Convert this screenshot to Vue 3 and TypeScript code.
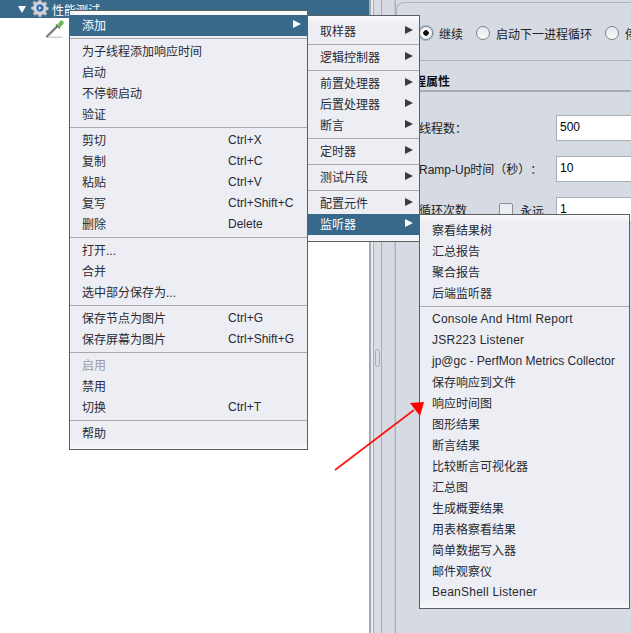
<script setup lang="ts">
interface Item { t?: string; k?: string; sub?: boolean; hl?: boolean; off?: boolean; sep?: boolean; wide?: boolean }
const wideLabels = ['Console And Html Report', 'JSR223 Listener', 'BeanShell Listener']
const s = (list: string): Item[] => list.split('|').map((x) => x === '-' ? { sep: true } : { t: x, wide: wideLabels.includes(x) })
const main: Item[] = [
  { t: '添加', sub: true, hl: true }, { sep: true },
  { t: '为子线程添加响应时间' }, { t: '启动' }, { t: '不停顿启动' }, { t: '验证' }, { sep: true },
  { t: '剪切', k: 'Ctrl+X' }, { t: '复制', k: 'Ctrl+C' }, { t: '粘贴', k: 'Ctrl+V' }, { t: '复写', k: 'Ctrl+Shift+C' }, { t: '删除', k: 'Delete' }, { sep: true },
  { t: '打开...' }, { t: '合并' }, { t: '选中部分保存为...' }, { sep: true },
  { t: '保存节点为图片', k: 'Ctrl+G' }, { t: '保存屏幕为图片', k: 'Ctrl+Shift+G' }, { sep: true },
  { t: '启用', off: true }, { t: '禁用' }, { t: '切换', k: 'Ctrl+T' }, { sep: true },
  { t: '帮助' },
]
const second: Item[] = [
  { t: '取样器', sub: true }, { sep: true }, { t: '逻辑控制器', sub: true }, { sep: true },
  { t: '前置处理器', sub: true }, { t: '后置处理器', sub: true }, { t: '断言', sub: true }, { sep: true },
  { t: '定时器', sub: true }, { sep: true }, { t: '测试片段', sub: true }, { sep: true },
  { t: '配置元件', sub: true }, { t: '监听器', sub: true, hl: true },
]
const third: Item[] = s('察看结果树|汇总报告|聚合报告|后端监听器|-|Console And Html Report|JSR223 Listener|jp@gc - PerfMon Metrics Collector|保存响应到文件|响应时间图|图形结果|断言结果|比较断言可视化器|汇总图|生成概要结果|用表格察看结果|简单数据写入器|邮件观察仪|BeanShell Listener')
const menus = [
  { cls: 'm1', items: main },
  { cls: 'm2', items: second },
  { cls: 'm3', items: third },
]
</script>

<template>
  <div class="screen">
    <aside class="tree">
      <div class="tree-row selected">
        <span class="twist"></span>
        <svg class="gear" width="18" height="18" viewBox="0 0 20 20">
          <path d="M8.500 1h3l.5 2.400 1.600.7 2.100-1.300 2.100 2.100-1.300 2.100.7 1.600 2.400.5v3l-2.400.5-.7 1.600 1.300 2.100-2.100 2.100-2.100-1.300-1.600.7-.5 2.400h-3l-.5-2.400-1.600-.7-2.100 1.300-2.100-2.100 1.300-2.100-.7-1.600L0 11.500v-3l2.400-.5.7-1.600-1.300-2.100 2.100-2.100 2.100 1.300L7.600 2.800z" fill="#cfd3d8" stroke="#79828c" stroke-width=".8"/>
          <circle cx="10" cy="10" r="4.600" fill="#2c67a8" stroke="#f2f4f7" stroke-width=".9"/>
          <path d="M8.600 7.800l3.200 2.200-3.200 2.200z" fill="#dbe7f3"/>
        </svg>
        <span class="tree-label">性能测试</span>
      </div>
      <div class="tree-row child">
        <svg width="20" height="20" viewBox="0 0 20 20">
          <ellipse cx="9" cy="18.300" rx="8" ry="1" fill="#d4d4d4"/>
          <path d="M1 16.500l-.5 1.500 1.500-.5 9.500-9.500-1-1z" fill="#8b9197" stroke="#444a4f" stroke-width=".8"/>
          <path d="M9.500 6l1-1 4 4-1 1z" fill="#4c7d45"/>
          <path d="M11.500 5.500l3-3.800c1.800-1 4 1.200 3 3L14 8.500z" fill="#6bb35c"/>
        </svg>
      </div>
    </aside>
    <div class="splitter"><span class="grip"></span></div>
    <main class="right">
      <section class="card">
        <div class="radios">
          <span class="radio on"></span><span class="rlabel">继续</span>
          <span class="radio"></span><span class="rlabel">启动下一进程循环</span>
          <span class="radio"></span><span class="rlabel">停止线程</span>
        </div>
      </section>
      <h3 class="title">线程属性</h3>
      <div class="field"><label class="flabel">线程数：</label><span class="input">500</span></div>
      <div class="field"><label class="flabel">Ramp-Up时间（秒）：</label><span class="input">10</span></div>
      <div class="field"><label class="flabel short">循环次数</label><span class="check"></span><span class="forever">永远</span><span class="input">1</span></div>
    </main>

    <div v-for="m in menus" :key="m.cls" class="menu" :class="m.cls">
      <template v-for="(it, i) in m.items" :key="i">
        <div v-if="it.sep" class="sep"></div>
        <div v-else class="item" :class="{ hl: it.hl, off: it.off, wide: it.wide }">
          <span class="label">{{ it.t }}</span>
          <span v-if="it.k" class="key">{{ it.k }}</span>
          <span v-if="it.sub" class="arrow"></span>
        </div>
      </template>
    </div>

    <svg class="pointer" width="100" height="80" viewBox="0 0 100 80">
      <path d="M1 75L80 15" stroke="#ff1010" stroke-width="1.600" fill="none"/>
      <path d="M90 7L76 8 86 21z" fill="#ff0000"/>
    </svg>
  </div>
</template>

<style>
html, body { margin: 0; background: #fff; overflow: hidden; }
</style>

<style scoped>
.screen {
  position: relative;
  display: flex;
  width: 631px;
  height: 633px;
  overflow: hidden;
  font-family: "Liberation Sans", "Noto Sans CJK SC", sans-serif;
  font-size: 12px;
  color: #222;
  background: #d6dae2;
}
.tree { width: 369px; flex: none; background: #fff; }
.tree-row { height: 18px; display: flex; align-items: center; }
.selected { background: #38688a; color: #fff; padding-left: 18px; }
.twist { width: 0; height: 0; border-left: 4px solid transparent; border-right: 4px solid transparent; border-top: 7px solid #fff; margin-right: 5px; }
.gear { margin-top: -2px; flex: none; }
.tree-label { font-size: 12px; margin-left: 3px; }
.child { height: 20px; padding: 1px 0 0 46px; }
.splitter {
  width: 27px;
  flex: none;
  box-sizing: border-box;
  display: flex;
  align-items: flex-start;
  padding-left: 6px;
  background: linear-gradient(90deg,
    #a4a8b0 0 2px, #e9ebef 2px 4px, #a9adb5 4px 5px, #d9dce3 5px 12px, #a9adb5 12px 13px, #d6dae2 13px 25px, #c3c7cf 25px 26px, #aeb2ba 26px 27px);
}
.grip { display: block; box-sizing: border-box; width: 5px; height: 18px; margin-top: 349px; border: 1px solid #a9adb5; border-radius: 3px; }
.right { flex: 1; min-width: 0; overflow: hidden; white-space: nowrap; }
.card {
  box-sizing: border-box;
  height: 59px;
  margin-top: 2px;
  border: 1px solid #aeb2ba;
  border-right: 0;
  border-radius: 8px 0 0 0;
  background: #d6dae2;
}
.radios { display: flex; align-items: center; height: 22px; margin-top: 19px; padding-left: 22px; }
.radio {
  box-sizing: border-box;
  flex: none;
  width: 14px;
  height: 14px;
  border: 1px solid #7d828a;
  border-radius: 50%;
  background: linear-gradient(#e4e6ea, #fbfbfc);
  margin-right: 6px;
}
.radio.on { background: radial-gradient(circle, #111 0 2.500px, #f4f5f7 3px); box-shadow: 0 0 0 1px #9cb6cc; }
.rlabel { margin-right: 13px; }
.title { box-sizing: border-box; margin: 0; height: 31px; padding: 14px 0 0 6px; font-size: 12px; line-height: 14px; font-weight: bold; color: #111; border-bottom: 2px solid #a9adb5; }
.field { display: flex; align-items: center; height: 26px; margin-top: 15px; padding-left: 23px; }
.title + .field { margin-top: 23px; }
.flabel { width: 137px; flex: none; padding-bottom: 2px; text-spacing-trim: space-all; }
.flabel.short { width: 80px; }
.input {
  box-sizing: border-box;
  flex: none;
  width: 120px;
  height: 26px;
  padding: 4px 3px;
  background: #fff;
  border: 1px solid #a9adb5;
  color: #000;
}
.check { box-sizing: border-box; width: 14px; height: 14px; border: 1px solid #8a8f96; background: #eceef2; border-radius: 2px; margin-right: 7px; flex: none; }
.forever { width: 36px; flex: none; }

.menu {
  position: absolute;
  box-sizing: border-box;
  background: linear-gradient(#fbfbfc, #eceef3 8px, #eceef3 calc(100% - 10px), #f8f8fa);
  border: 1px solid #5e5e5e;
  padding: 4px 0;
}
.m1 { left: 69px; top: 10px; width: 239px; height: 440px; z-index: 1; }
.m2 { left: 307px; top: 15px; width: 113px; height: 227px; z-index: 2; padding-top: 5px; }
.m3 { left: 419px; top: 214px; width: 211px; height: 395px; z-index: 3; padding-top: 5px; }
.item {
  position: relative;
  box-sizing: border-box;
  display: flex;
  align-items: center;
  height: 21px;
  padding: 0 0 2px 12px;
  font-size: 12px;
  white-space: nowrap;
  color: #2a2a33;
}
.item.hl { background: #38688a; color: #fff; }
.item.off { color: #9a9a9a; }
.item.wide { letter-spacing: .24px; }
.key { position: absolute; left: 158px; }
.arrow {
  position: absolute;
  right: 6px;
  top: 5px;
  width: 0;
  height: 0;
  border-top: 4.500px solid transparent;
  border-bottom: 4.500px solid transparent;
  border-left: 8px solid #3a3a3a;
}
.hl .arrow { border-left-color: #fff; }
.sep { height: 5px; box-sizing: border-box; border-top: 1px solid #a8a8ae; margin-top: 2px; margin-bottom: -2px; }
.pointer { position: absolute; left: 334px; top: 395px; z-index: 4; }
</style>
